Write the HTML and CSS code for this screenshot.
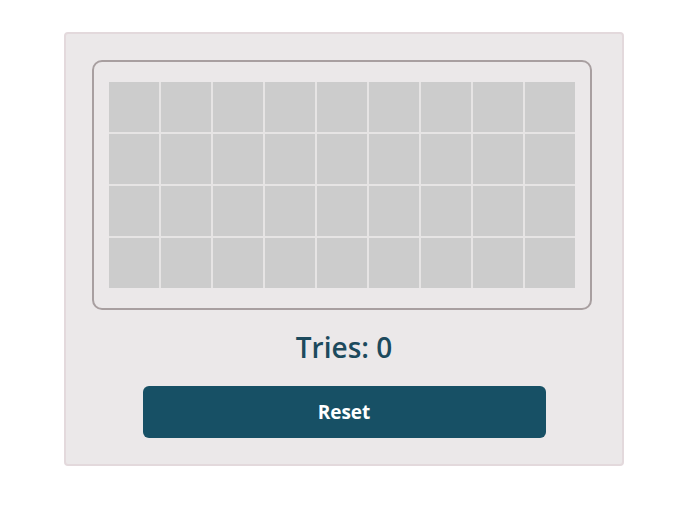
FILE: index.html
```html
<!DOCTYPE html>
<html>
<head>
<meta charset="utf-8">
<link rel="stylesheet" href="styles.css">
</head>
<body>
<div class="card">
  <div class="board">
    <div class="grid">
      <div class="tile"></div><div class="tile"></div><div class="tile"></div><div class="tile"></div><div class="tile"></div><div class="tile"></div><div class="tile"></div><div class="tile"></div><div class="tile"></div>
      <div class="tile"></div><div class="tile"></div><div class="tile"></div><div class="tile"></div><div class="tile"></div><div class="tile"></div><div class="tile"></div><div class="tile"></div><div class="tile"></div>
      <div class="tile"></div><div class="tile"></div><div class="tile"></div><div class="tile"></div><div class="tile"></div><div class="tile"></div><div class="tile"></div><div class="tile"></div><div class="tile"></div>
      <div class="tile"></div><div class="tile"></div><div class="tile"></div><div class="tile"></div><div class="tile"></div><div class="tile"></div><div class="tile"></div><div class="tile"></div><div class="tile"></div>
    </div>
  </div>
  <div class="tries">Tries: 0</div>
  <button class="reset">Reset</button>
</div>
</body>
</html>
```
FILE: styles.css
```css
html, body {
  margin: 0;
  padding: 0;
  background: #ffffff;
}
body {
  font-family: "Open Sans", "Liberation Sans", sans-serif;
}
.card {
  box-sizing: border-box;
  width: 560px;
  margin: 32px 0 0 64px;
  padding: 26px;
  background: #ebe8e9;
  border: 2px solid #e3d9dc;
  border-radius: 4px;
  display: flex;
  flex-direction: column;
  align-items: center;
}
.board {
  box-sizing: border-box;
  align-self: flex-start;
  width: 500px;
  padding: 20px 15px;
  border: 2px solid #a89fa0;
  border-radius: 10px;
}
.grid {
  display: grid;
  grid-template-columns: repeat(9, 50px);
  grid-auto-rows: 50px;
  gap: 2px;
  background: #e6e4e4;
}
.tile {
  background: #cccccc;
}
.tries {
  margin: 17px 0 19px;
  font-size: 28px;
  line-height: 40px;
  font-weight: 600;
  color: #1c4a5d;
  text-align: center;
}
.reset {
  width: 403px;
  height: 52px;
  border: none;
  border-radius: 6px;
  background: #175065;
  color: #ffffff;
  font-family: "Open Sans", "Liberation Sans", sans-serif;
  font-size: 19px;
  font-weight: 700;
  padding: 0;
  cursor: pointer;
}
```
